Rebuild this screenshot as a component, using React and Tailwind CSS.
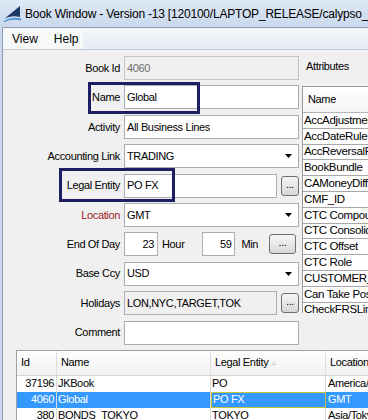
import React from "react";

const F = "font-['Liberation_Sans',Arial,sans-serif]";

function Arrow() {
  return (
    <svg width="7" height="4" viewBox="0 0 7 4" className="shrink-0">
      <path d="M0 0 L7 0 L3.5 4 Z" fill="#000" />
    </svg>
  );
}

function DotsBtn({ w = 18 }) {
  return (
    <div
      className="h-[20px] shrink-0 rounded-[3px] border border-[#707070] bg-gradient-to-b from-[#f4f4f4] via-[#e8e8e8] to-[#d6d6d6] flex items-center justify-center text-[11px] leading-none text-black pb-[3px]"
      style={{ width: w }}
    >
      ...
    </div>
  );
}

function Row({ label, red, children }) {
  return (
    <div className="flex items-center h-[24px]">
      <div className={`w-[117px] text-right whitespace-nowrap ${red ? "text-[#9b1c1c]" : "text-black"}`}>{label}</div>
      <div className="ml-[4px] w-[175px] h-full flex items-center">{children}</div>
    </div>
  );
}

function Field({ children, gray, dim, className = "" }) {
  return (
    <div
      className={`h-full flex items-center pl-[2px] whitespace-nowrap overflow-hidden border ${
        gray ? "bg-[#f0f0f0]" : "bg-white"
      } ${dim ? "border-[#c4c4c4] text-[#6d6d6d]" : "border-[#abadb3] text-black"} ${className}`}
    >
      {children}
    </div>
  );
}

function Combo({ children }) {
  return (
    <div className="h-full w-full flex items-center justify-between pl-[2px] pr-[6px] border border-[#abadb3] bg-white text-black">
      <span>{children}</span>
      <Arrow />
    </div>
  );
}

const attrs = [
  "AccAdjustment",
  "AccDateRule",
  "AccReversalRule",
  "BookBundle",
  "CAMoneyDiff",
  "CMF_ID",
  "CTC Compound",
  "CTC Consolidation",
  "CTC Offset",
  "CTC Role",
  "CUSTOMER_ID",
  "Can Take Position",
  "CheckFRSLimit",
];

export default function App() {
  return (
    <div className={`relative w-[368px] h-[420px] overflow-hidden bg-[#cddbee] ${F} text-[11px] tracking-[-0.35px]`}>
      {/* Title bar */}
      <div className="h-[27px] flex items-center bg-gradient-to-b from-[#dfe9f6] to-[#c9d8ec] pl-[3px]">
        <svg width="18" height="17" viewBox="0 0 18 17" className="shrink-0">
          <path d="M1 14 L17 1 L17 12 C12 10.5 6 11 1 14 Z" fill="#1d3766" />
          <path d="M0 17 C5 13 11 12 18 13.5 L18 15.5 C12 14 6 14.5 2 17 Z" fill="#4f97d6" />
        </svg>
        <span className="ml-[4px] text-[12px] tracking-[-0.2px] text-black whitespace-nowrap">
          Book Window - Version -13 [120100/LAPTOP_RELEASE/calypso_u
        </span>
      </div>

      {/* Client */}
      <div className="ml-[2px] h-[393px] border-l border-t border-[#8e9db3] bg-[#f0f0f0]">
        {/* Menu bar */}
        <div className="h-[22px] flex bg-gradient-to-b from-[#f3f6fa] to-[#e6ecf4] border-b border-[#c2ccd9] tracking-normal">
          <div className="w-[80px] h-full flex items-center bg-[#f7f8fa] text-[12px] text-black pt-[1px]">
            <span className="ml-[9px]">View</span>
            <span className="ml-[16px]">Help</span>
          </div>
        </div>

        {/* Form + attributes */}
        <div className="flex pt-[6px]">
          <div className="flex flex-col gap-[5.4px] w-[296px] shrink-0">
            <Row label="Book Id">
              <Field gray dim className="w-full">4060</Field>
            </Row>
            <Row label="Name">
              <Field className="w-full">Global</Field>
            </Row>
            <Row label="Activity">
              <Field className="w-full">All Business Lines</Field>
            </Row>
            <Row label="Accounting Link">
              <Combo>TRADING</Combo>
            </Row>
            <Row label="Legal Entity">
              <Field className="w-[154px]">PO FX</Field>
              <div className="ml-[4px]">
                <DotsBtn />
              </div>
            </Row>
            <Row label="Location" red>
              <Combo>GMT</Combo>
            </Row>
            <Row label="End Of Day">
              <Field className="w-[34px] justify-end pr-[3px]">23</Field>
              <span className="ml-[4px] text-black">Hour</span>
              <Field className="ml-[18px] w-[33px] justify-end pr-[3px]">59</Field>
              <span className="ml-[6px] text-black">Min</span>
              <div className="ml-[11px]">
                <DotsBtn w={27} />
              </div>
            </Row>
            <Row label="Base Ccy">
              <Combo>USD</Combo>
            </Row>
            <Row label="Holidays">
              <Field gray className="w-[154px]">LON,NYC,TARGET,TOK</Field>
              <div className="ml-[4px]">
                <DotsBtn />
              </div>
            </Row>
            <Row label="Comment">
              <Field className="w-full"></Field>
            </Row>
          </div>

          {/* Attributes */}
          <div className="ml-[3px] flex flex-col">
            <div className="h-[20px] pl-[4px] flex items-center text-black whitespace-nowrap">Attributes</div>
            <div className="mt-[10px] w-[140px] h-[227px] overflow-hidden border-l border-t border-[#9a9a9a] bg-white">
              <div className="h-[26px] flex items-center pl-[5px] border-b border-[#b5b5b5] bg-gradient-to-b from-white to-[#f4f4f4] text-black">
                Name
              </div>
              {attrs.map((a) => (
                <div
                  key={a}
                  className="h-[15.8px] flex items-center pl-[1px] border-b border-[#a8a8a8] text-black text-[11.5px] whitespace-nowrap"
                >
                  {a}
                </div>
              ))}
            </div>
          </div>
        </div>

        {/* Bottom table */}
        <div className="ml-[13px] mt-[5px] border-l border-t border-[#a0a0a0] bg-white w-[400px]">
          <div className="h-[25px] flex bg-gradient-to-b from-white to-[#f1f1f1] border-b border-[#d5d5d5] text-black">
            <div className="w-[40px] border-r border-[#dedede] flex items-center pl-[4px]">Id</div>
            <div className="w-[154px] border-r border-[#dedede] flex items-center pl-[4px]">Name</div>
            <div className="w-[115px] border-r border-[#dedede] flex items-center pl-[4px]">
              Legal Entity
              <span className="ml-[4px] text-[8px] text-[#b8b8b8]">▵</span>
            </div>
            <div className="flex-1 flex items-center pl-[4px]">Location</div>
          </div>
          {[
            ["37196", "JKBook", "PO", "America/New_York", false],
            ["4060", "Global", "PO FX", "GMT", true],
            ["380", "BONDS_TOKYO", "TOKYO", "Asia/Tokyo", false],
          ].map(([id, name, le, loc, sel]) => (
            <div
              key={id}
              className={`h-[16px] flex whitespace-nowrap ${sel ? "bg-[#3399ff] text-white" : "text-black"}`}
            >
              <div className="w-[40px] border-r border-[#d8d8d8] flex items-center justify-end pr-[2px]">{id}</div>
              <div className="w-[154px] border-r border-[#d8d8d8] flex items-center pl-[1px]">{name}</div>
              <div
                className={`w-[115px] flex items-center pl-[1px] ${
                  sel ? "border border-[#c4c43a]" : "border-r border-[#d8d8d8]"
                }`}
              >
                {le}
              </div>
              <div className="flex-1 flex items-center pl-[2px]">{loc}</div>
            </div>
          ))}
        </div>
      </div>

      {/* Highlight boxes */}
      <div className="absolute left-[88px] top-[82px] w-[112px] h-[32px] border-[3px] border-[#1e1e62]" />
      <div className="absolute left-[59px] top-[168px] w-[116px] h-[34px] border-[3px] border-[#1e1e62]" />
    </div>
  );
}
